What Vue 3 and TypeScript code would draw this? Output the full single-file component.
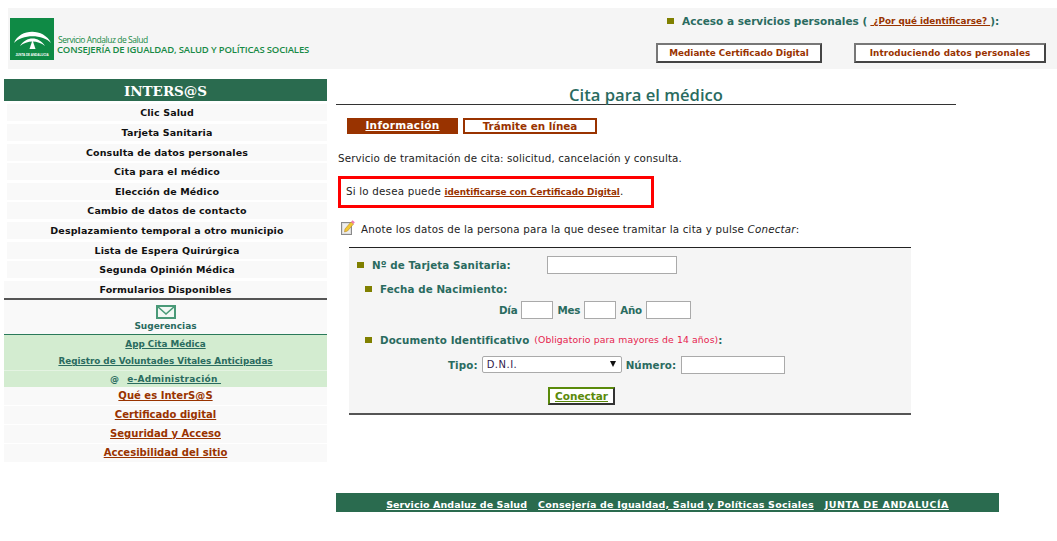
<script setup lang="ts">
const menu: string[] = [
  'Clic Salud', 'Tarjeta Sanitaria', 'Consulta de datos personales', 'Cita para el médico',
  'Elección de Médico', 'Cambio de datos de contacto', 'Desplazamiento temporal a otro municipio',
  'Lista de Espera Quirúrgica', 'Segunda Opinión Médica', 'Formularios Disponibles',
]
const bottom: string[] = ['Qué es InterS@S', 'Certificado digital', 'Seguridad y Acceso', 'Accesibilidad del sitio']
</script>

<template>
  <div class="page">
    <header class="head">
      <div class="brand">
        <svg class="logo" width="44" height="42" viewBox="0 0 44 42">
          <rect width="44" height="42" fill="#0f8a45" />
          <path d="M4 25 C10 10 34 10 41 25 C33 16 12 16 4 25Z" fill="#fff" />
          <path d="M10 28 C16 18 29 18 35 28 C28 22 17 22 10 28Z" fill="#fff" />
          <path d="M22.5 22 L25.5 31 H19.5 Z" fill="#fff" />
          <text class="logotext" x="22" y="38" text-anchor="middle">JUNTA DE ANDALUCIA</text>
        </svg>
        <div class="brandtext">
          <div class="sas">Servicio Andaluz de Salud</div>
          <div class="cons">CONSEJERÍA DE IGUALDAD, SALUD Y POLÍTICAS SOCIALES</div>
        </div>
      </div>
      <div class="access">
        <div class="accessline">
          <span class="bullet"></span>
          <b>Acceso a servicios personales (</b>
          <a class="why">&nbsp;¿Por qué identificarse?&nbsp;</a>
          <b>):</b>
        </div>
        <div class="accessbtns">
          <span class="hbtn first">Mediante Certificado Digital</span>
          <span class="hbtn second">Introduciendo datos personales</span>
        </div>
      </div>
    </header>

    <div class="cols">
      <aside class="side">
        <div class="sidetitle">INTERS@S</div>
        <div class="menu">
          <div v-for="m in menu" :key="m" class="mi">{{ m }}</div>
        </div>
        <div class="sug">
          <svg width="20" height="14" viewBox="0 0 20 14">
            <rect x="1" y="1" width="18" height="12" fill="#f2f8f4" stroke="#4a9a78" stroke-width="2" />
            <path d="M1 1 L10 9 L19 1" fill="none" stroke="#4a9a78" stroke-width="1.6" />
          </svg>
          <div>Sugerencias</div>
        </div>
        <div class="greens">
          <a>App Cita Médica</a>
          <a>Registro de Voluntades Vitales Anticipadas</a>
          <div class="eadm"><span>@</span><a>e-Administración&nbsp;</a></div>
        </div>
        <div class="bottom">
          <a v-for="b in bottom" :key="b" class="bi">{{ b }}</a>
        </div>
      </aside>

      <main class="main">
        <h1 class="title">Cita para el médico</h1>
        <div class="tabs">
          <span class="tab on">Información</span>
          <span class="tab off">Trámite en línea</span>
        </div>
        <p class="intro">Servicio de tramitación de cita: solicitud, cancelación y consulta.</p>
        <div class="redbox">Si lo desea puede <a class="cert">identificarse con Certificado Digital</a>.</div>
        <div class="note">
          <svg width="15" height="17" viewBox="0 0 15 17">
            <rect x="1.5" y="3.5" width="10" height="12" fill="#dcdcdc" stroke="#8a8a8a" />
            <rect x="3" y="5" width="7" height="9" fill="#eee" />
            <path d="M5 10 L11 3 L13.5 5 L7.5 12 L4.5 13Z" fill="#f2c832" stroke="#b5842c" stroke-width=".6" />
            <path d="M11 3 L12.5 1.2 L14.8 3.2 L13.5 5Z" fill="#f07ab0" />
          </svg>
          <span>Anote los datos de la persona para la que desee tramitar la cita y pulse <i>Conectar</i>:</span>
        </div>
        <form class="form" @submit.prevent>
          <div class="r1">
            <span class="bullet"></span><label class="l1">Nº de Tarjeta Sanitaria:</label>
            <input class="inp card" />
          </div>
          <div class="r2"><span class="bullet"></span><label>Fecha de Nacimiento:</label></div>
          <div class="r3">
            <label>Día</label><input class="inp d" />
            <label>Mes</label><input class="inp d" />
            <label>Año</label><input class="inp y" />
          </div>
          <div class="r4">
            <span class="bullet"></span><label>Documento Identificativo</label>
            <span class="must">(Obligatorio para mayores de 14 años)</span><label>:</label>
          </div>
          <div class="r5">
            <label>Tipo:</label>
            <span class="sel">D.N.I.<i class="arrow"></i></span>
            <label>Número:</label><input class="inp num" />
          </div>
          <div class="r6"><span class="go">Conectar</span></div>
        </form>
        <footer class="foot">
          <a class="f1">Servicio Andaluz de Salud</a>
          <a class="f2">Consejería de Igualdad, Salud y Políticas Sociales</a>
          <a class="f3">JUNTA DE ANDALUCÍA</a>
        </footer>
      </main>
    </div>
  </div>
</template>

<style>
html, body { margin: 0; background: #fff; }
</style>

<style scoped>
.page { width: 1057px; height: 541px; overflow: hidden; font-family: "DejaVu Sans", Verdana, sans-serif; font-size: 10px; color: #222; }
a { text-decoration: underline; }
.bullet { display: inline-block; width: 7px; height: 6px; background: #808000; flex: none; }

.head { margin: 8px 0 0 8px; height: 61px; background: #f5f5f5; display: flex; justify-content: space-between; }
.brand { display: flex; align-items: flex-end; padding: 10px 0 9px 2px; }
.logo { display: block; }
.logotext { font-family: "Liberation Sans", sans-serif; font-size: 3px; font-weight: 700; fill: #fff; }
.brandtext { margin: 0 0 4px 3px; color: #178a45; font-family: "Open Sans", sans-serif; }
.sas { font-size: 8.5px; line-height: 9px; letter-spacing: -.45px; margin-left: 1px; position: relative; top: 1px; }
.cons { font-size: 9.5px; line-height: 13px; font-weight: 600; letter-spacing: -.16px; white-space: nowrap; }

.access { width: 400px; margin-right: 1px; padding-top: 6px; box-sizing: border-box; }
.accessline { display: flex; align-items: center; height: 14px; padding-left: 11px; font-size: 10.5px; color: #2a6b5f; white-space: pre; }
.accessline b { margin-left: 8px; letter-spacing: .02px; }
.accessline .why + b { margin-left: 0; }
.why { font-size: 8.8px; font-weight: 700; color: #993300; margin-left: 3px; }
.accessbtns { display: flex; margin-top: 15px; }
.hbtn { box-sizing: border-box; height: 20px; border: 2px solid #444; border-left-color: #777; border-top-color: #777; background: #fff; color: #993300; font-size: 8.8px; font-weight: 700; display: flex; align-items: center; justify-content: center; white-space: nowrap; }
.hbtn.first { width: 166px; }
.hbtn.second { width: 192px; margin-left: 32px; letter-spacing: .1px; }

.cols { display: flex; margin: 10px 0 0 4px; align-items: flex-start; }
.side { width: 323px; flex: none; text-align: center; }
.sidetitle { height: 22px; line-height: 24px; background: #2a6b4f; color: #fff; font-family: "DejaVu Serif", serif; font-size: 13.5px; font-weight: 700; }
.menu { margin-top: 3.4px; padding-left: 3px; }
.mi { height: 17px; line-height: 17px; margin-bottom: 2.6px; background: #f9f9f9; color: #111; font-size: 9.5px; font-weight: 700; white-space: nowrap; letter-spacing: .12px; }
.mi:last-child { margin-bottom: .6px; margin-left: -3px; }
.sug { border-top: 2px solid #555; box-sizing: border-box; border-bottom: 1px solid #2a7a5a; background: #f9f9f9; padding-top: 5px; font-size: 9px; font-weight: 700; color: #2a6b5f; height: 37px; }
.sug svg { display: block; margin: 0 auto 2px; }
.greens { background: #d3ecd0; color: #2a6b5f; font-size: 8.8px; font-weight: 700; padding-top: 1px; height: 52px; box-sizing: border-box; }
.greens > a { display: block; height: 17px; line-height: 17px; }
.eadm { border-top: 1px solid #e4f3e2; height: 17px; line-height: 16px; font-size: 9px; letter-spacing: .25px; }
.eadm span { margin-right: 8px; }
.bi { display: block; height: 18px; line-height: 18px; margin-bottom: 1px; background: #f9f9f9; color: #993300; font-size: 10.05px; font-weight: 700; }

.main { margin-left: 9px; width: 663px; }
.title { box-sizing: border-box; width: 620px; height: 26px; margin: 0; border-bottom: 1px solid #333; text-align: center; font-family: "Open Sans", sans-serif; font-size: 16.6px; line-height: 32px; font-weight: 600; color: #2a6b5f; white-space: nowrap; }
.tabs { display: flex; margin: 13px 0 0 11px; }
.tab { box-sizing: border-box; height: 16px; line-height: 15px; font-size: 10.5px; font-weight: 700; text-align: center; color: #993300; }
.tab.on { width: 111px; background: #993300; color: #fff; text-decoration: underline; letter-spacing: .3px; }
.tab.off { width: 134px; margin-left: 5px; border: 2px solid #993300; line-height: 13px; font-size: 10.4px; }
.intro { margin: 18px 0 0 2px; font-size: 10.3px; line-height: 13px; letter-spacing: .14px; white-space: nowrap; color: #222; }
.redbox { box-sizing: border-box; width: 316px; height: 32px; margin: 11px 0 0 2px; border: 3px solid #f00; padding-left: 5px; line-height: 25px; font-size: 10.3px; letter-spacing: .2px; white-space: nowrap; }
.cert { color: #993300; font-size: 8.8px; font-weight: 700; letter-spacing: 0; }
.note { display: flex; align-items: flex-start; margin: 12px 0 0 4px; height: 13px; font-size: 10.3px; letter-spacing: .19px; white-space: nowrap; line-height: 13px; padding-top: 3px; box-sizing: content-box; }
.note svg { margin: -4px 6px 0 0; flex: none; }
.form { box-sizing: border-box; width: 562px; height: 168px; margin: 11px 0 0 13px; background: #f5f5f5; border-top: 1px solid #222; border-bottom: 2px solid #555; padding-top: 8px; color: #2a6b5f; font-weight: 700; font-size: 10.3px; letter-spacing: .1px; }
label { white-space: nowrap; }
.inp { box-sizing: border-box; display: block; height: 18px; padding: 0; border: 1px solid #aaa; background: #fff; outline: 0; margin: 0; }
.r1 { display: flex; align-items: center; padding-left: 8px; }
.r1 .l1 { width: 175px; margin-left: 8px; }
.card { width: 130px; }
.r2 { display: flex; align-items: center; padding-left: 16px; margin-top: 6px; height: 17px; }
.r2 label, .r4 label:first-of-type { margin-left: 8px; }
.r3 { display: flex; align-items: center; gap: 4px; padding-left: 150px; margin-top: 4px; height: 18px; letter-spacing: -.2px; }
.d { width: 32px; }
.y { width: 45px; }
.r4 { display: flex; align-items: center; padding-left: 16px; margin-top: 13px; height: 15px; }
.must { color: #e6234f; font-weight: 400; font-size: 9.3px; margin-left: 5px; letter-spacing: .1px; }
.r5 { display: flex; align-items: center; gap: 4px; padding-left: 99px; margin-top: 9px; height: 17px; }
.sel { box-sizing: border-box; position: relative; width: 140px; height: 17px; line-height: 15px; border: 1px solid #aaa; background: #fff; border-radius: 2px; padding-left: 4px; color: #331a4d; font-weight: 400; font-size: 10px; letter-spacing: .5px; }
.arrow { position: absolute; right: 5px; top: 4px; width: 0; height: 0; border: 3px solid transparent; border-top: 6px solid #111; border-bottom: 0; }
.num { width: 104px; margin-left: 1px; }
.r6 { margin: 14px 0 0 199px; }
.go { display: block; box-sizing: border-box; width: 67px; height: 18px; line-height: 14px; border: 2px solid #5a8a0a; border-right-color: #333; border-bottom-color: #333; background: #fff; text-align: center; color: #5a8a0a; text-decoration: underline; font-size: 10.5px; letter-spacing: 0; }
.foot { box-sizing: border-box; width: 663px; height: 19px; margin-top: 78px; background: #2a6b4f; color: #fff; display: flex; align-items: center; justify-content: center; gap: 11px; font-size: 9.5px; font-weight: 700; white-space: nowrap; padding-top: 3px; }
.f1 { letter-spacing: .08px; }
.f2 { letter-spacing: .2px; }
.f3 { letter-spacing: .5px; }
</style>
